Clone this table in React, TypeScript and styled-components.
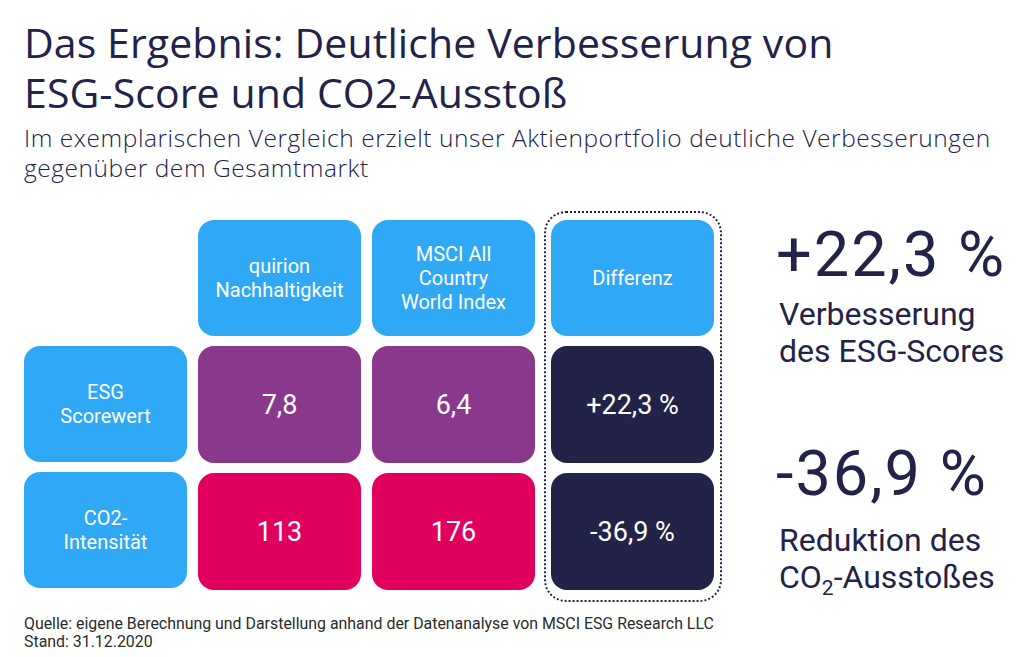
import React from "react";
import styled, { createGlobalStyle } from "styled-components";

const GlobalStyle = createGlobalStyle`
  html, body { margin: 0; padding: 0; background: #ffffff; }
  body { font-family: "Roboto", "Liberation Sans", sans-serif; }
  * { box-sizing: border-box; }
`;

const NAVY = "#23234a";
const BLUE = "#2fa8f6";
const PURPLE = "#8a388c";
const PINK = "#e2005e";

const Page = styled.div`
  width: 1024px;
  height: 657px;
  padding: 17px 24px 0 24px;
  color: ${NAVY};
  overflow: hidden;
`;

const Title = styled.h1`
  margin: 0;
  font-family: "Open Sans", "Liberation Sans", sans-serif;
  font-weight: 500;
  font-size: 41px;
  line-height: 50px;
  letter-spacing: 0.1px;
  color: ${NAVY};
  white-space: nowrap;
`;

const Subtitle = styled.p`
  margin: 6px 0 0 0;
  font-family: "Open Sans", "Liberation Sans", sans-serif;
  font-weight: 300;
  font-size: 24.5px;
  line-height: 30px;
  letter-spacing: 0.55px;
  color: ${NAVY};
  white-space: nowrap;
`;

const Main = styled.div`
  display: flex;
  align-items: flex-start;
  margin-top: 28px;
`;

const Table = styled.div`
  display: flex;
  align-items: flex-start;
  gap: 11px;
`;

const Column = styled.div`
  display: flex;
  flex-direction: column;
  gap: 10px;
  padding-top: 9px;
`;

const DiffFrame = styled.div`
  display: flex;
  flex-direction: column;
  gap: 10px;
  margin-left: -2px;
  padding: 7px 6px 10px 5px;
  border: 2px dotted ${NAVY};
  border-radius: 22px;
`;

const Spacer = styled.div`
  width: 163px;
  height: 116px;
`;

const Cell = styled.div<{ $bg: string; $big?: boolean }>`
  width: 163px;
  height: ${(p) => (p.$big ? "117px" : "116px")};
  border-radius: 16px;
  background: ${(p) => p.$bg};
  color: #ffffff;
  display: flex;
  align-items: center;
  justify-content: center;
  text-align: center;
  font-family: "Roboto", "Liberation Sans", sans-serif;
  font-size: ${(p) => (p.$big ? "27px" : "20px")};
  line-height: ${(p) => (p.$big ? "32px" : "24px")};
  font-weight: 400;
`;

const Right = styled.div`
  margin-left: 57px;
  display: flex;
  flex-direction: column;
  padding-top: 12px;
`;

const BigNumber = styled.div<{ $gap?: number }>`
  font-family: "Roboto", "Liberation Sans", sans-serif;
  font-size: 63px;
  line-height: 64px;
  font-weight: 400;
  letter-spacing: 2px;
  margin-left: -3px;
  margin-top: ${(p) => p.$gap ?? 0}px;
  color: ${NAVY};
  white-space: nowrap;
`;

const Caption = styled.div<{ $gap: number }>`
  font-family: "Roboto", "Liberation Sans", sans-serif;
  font-size: 32px;
  line-height: 37px;
  font-weight: 400;
  margin-top: ${(p) => p.$gap}px;
  color: ${NAVY};
  white-space: nowrap;
  sub {
    font-size: 21px;
    line-height: 0;
    vertical-align: -7px;
  }
`;

const Footer = styled.div`
  margin-top: 13px;
  font-family: "Roboto", "Liberation Sans", sans-serif;
  font-size: 15.9px;
  line-height: 18px;
  color: #2b2b2b;
  white-space: nowrap;
`;

export default function App() {
  return (
    <>
      <GlobalStyle />
      <Page>
        <Title>
          Das Ergebnis: Deutliche Verbesserung von
          <br />
          ESG-Score und CO2-Ausstoß
        </Title>
        <Subtitle>
          Im exemplarischen Vergleich erzielt unser Aktienportfolio deutliche Verbesserungen
          <br />
          gegenüber dem Gesamtmarkt
        </Subtitle>
        <Main>
          <div>
            <Table>
              <Column>
                <Spacer />
                <Cell $bg={BLUE}>
                  ESG
                  <br />
                  Scorewert
                </Cell>
                <Cell $bg={BLUE}>
                  CO2-
                  <br />
                  Intensität
                </Cell>
              </Column>
              <Column>
                <Cell $bg={BLUE}>
                  quirion
                  <br />
                  Nachhaltigkeit
                </Cell>
                <Cell $bg={PURPLE} $big>
                  7,8
                </Cell>
                <Cell $bg={PINK} $big>
                  113
                </Cell>
              </Column>
              <Column>
                <Cell $bg={BLUE}>
                  MSCI All
                  <br />
                  Country
                  <br />
                  World Index
                </Cell>
                <Cell $bg={PURPLE} $big>
                  6,4
                </Cell>
                <Cell $bg={PINK} $big>
                  176
                </Cell>
              </Column>
              <DiffFrame>
                <Cell $bg={BLUE}>Differenz</Cell>
                <Cell $bg={NAVY} $big>
                  +22,3 %
                </Cell>
                <Cell $bg={NAVY} $big>
                  -36,9 %
                </Cell>
              </DiffFrame>
            </Table>
          </div>
          <Right>
            <BigNumber>+22,3 %</BigNumber>
            <Caption $gap={9}>
              Verbesserung
              <br />
              des ESG-Scores
            </Caption>
            <BigNumber $gap={72}>-36,9 %</BigNumber>
            <Caption $gap={16}>
              Reduktion des
              <br />
              CO<sub>2</sub>-Ausstoßes
            </Caption>
          </Right>
        </Main>
        <Footer>
          Quelle: eigene Berechnung und Darstellung anhand der Datenanalyse von MSCI ESG Research LLC
          <br />
          Stand: 31.12.2020
        </Footer>
      </Page>
    </>
  );
}
